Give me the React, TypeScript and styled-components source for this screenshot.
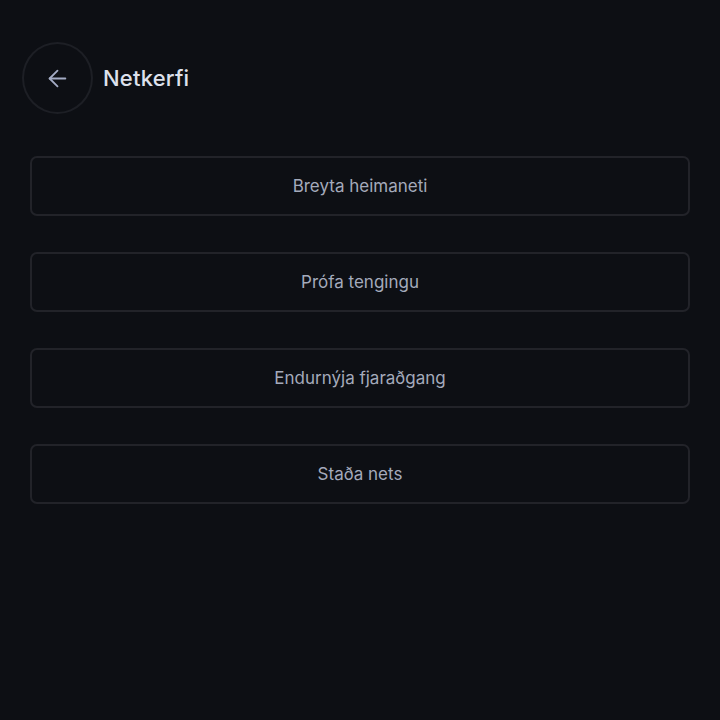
import React from "react";
import styled, { createGlobalStyle } from "styled-components";
import { ArrowLeft } from "lucide-react";

const Global = createGlobalStyle`
  html, body { margin: 0; padding: 0; background: #0d0f14; }
  body { font-family: "Inter", "Noto Sans", sans-serif; }
  * { box-sizing: border-box; }
`;

const Page = styled.div`
  width: 720px;
  min-height: 720px;
  background: #0d0f14;
  padding: 42px 30px 0 22px;
`;

const Header = styled.div`
  display: flex;
  align-items: center;
  gap: 10px;
`;

const BackButton = styled.button`
  width: 71px;
  height: 72px;
  border-radius: 50%;
  border: 2px solid #1d1f25;
  background: transparent;
  color: #a3abc4;
  display: flex;
  align-items: center;
  justify-content: center;
  padding: 0;
  cursor: pointer;
`;

const Title = styled.h1`
  margin: 0;
  font-size: 22px;
  font-weight: 500;
  color: #dde1ec;
  letter-spacing: 0.2px;
`;

const List = styled.div`
  display: flex;
  flex-direction: column;
  gap: 36px;
  margin-top: 42px;
  margin-left: 8px;
`;

const Item = styled.button`
  height: 60px;
  width: 660px;
  border: 2px solid #222329;
  border-radius: 7px;
  background: transparent;
  color: #a4aabb;
  font-family: "Inter", "Noto Sans", sans-serif;
  font-size: 17px;
  font-weight: 400;
  display: flex;
  align-items: center;
  justify-content: center;
  cursor: pointer;
`;

const items = ["Breyta heimaneti", "Prófa tengingu", "Endurnýja fjaraðgang", "Staða nets"];

export default function App() {
  return (
    <>
      <Global />
      <Page>
        <Header>
          <BackButton aria-label="Til baka">
            <ArrowLeft size={27} strokeWidth={1.6} />
          </BackButton>
          <Title>Netkerfi</Title>
        </Header>
        <List>
          {items.map((t) => (
            <Item key={t}>{t}</Item>
          ))}
        </List>
      </Page>
    </>
  );
}
